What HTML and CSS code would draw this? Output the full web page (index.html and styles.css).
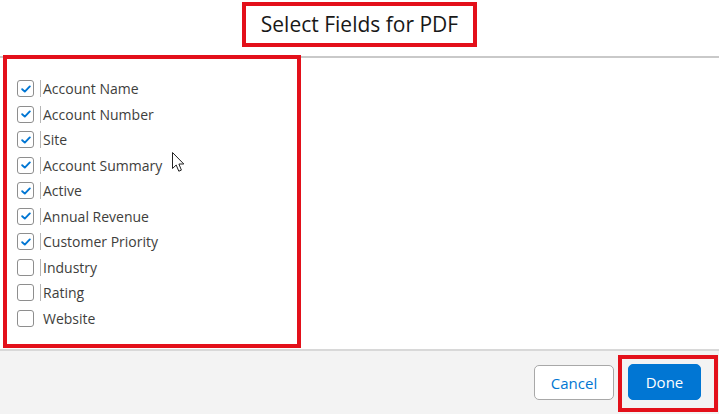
FILE: index.html
```html
<!DOCTYPE html>
<html lang="en">
<head>
<meta charset="utf-8">
<title>Select Fields for PDF</title>
<link rel="stylesheet" href="styles.css">
</head>
<body>
<div class="modal">
  <header class="modal-header">
    <h1 class="title">Select Fields for PDF</h1>
  </header>
  <section class="modal-body">
    <div class="field-list">
      <label class="field"><span class="cb checked"><svg viewBox="0 0 10 8" width="10" height="8"><path d="M1.2 4.2 L3.8 6.6 L8.8 1.4" fill="none" stroke="#0176d3" stroke-width="1.9" stroke-linecap="round" stroke-linejoin="round"/></svg></span><span class="sep"></span><span class="name">Account Name</span></label>
      <label class="field"><span class="cb checked"><svg viewBox="0 0 10 8" width="10" height="8"><path d="M1.2 4.2 L3.8 6.6 L8.8 1.4" fill="none" stroke="#0176d3" stroke-width="1.9" stroke-linecap="round" stroke-linejoin="round"/></svg></span><span class="sep"></span><span class="name">Account Number</span></label>
      <label class="field"><span class="cb checked"><svg viewBox="0 0 10 8" width="10" height="8"><path d="M1.2 4.2 L3.8 6.6 L8.8 1.4" fill="none" stroke="#0176d3" stroke-width="1.9" stroke-linecap="round" stroke-linejoin="round"/></svg></span><span class="sep"></span><span class="name">Site</span></label>
      <label class="field"><span class="cb checked"><svg viewBox="0 0 10 8" width="10" height="8"><path d="M1.2 4.2 L3.8 6.6 L8.8 1.4" fill="none" stroke="#0176d3" stroke-width="1.9" stroke-linecap="round" stroke-linejoin="round"/></svg></span><span class="sep"></span><span class="name">Account Summary</span></label>
      <label class="field"><span class="cb checked"><svg viewBox="0 0 10 8" width="10" height="8"><path d="M1.2 4.2 L3.8 6.6 L8.8 1.4" fill="none" stroke="#0176d3" stroke-width="1.9" stroke-linecap="round" stroke-linejoin="round"/></svg></span><span class="sep"></span><span class="name">Active</span></label>
      <label class="field"><span class="cb checked"><svg viewBox="0 0 10 8" width="10" height="8"><path d="M1.2 4.2 L3.8 6.6 L8.8 1.4" fill="none" stroke="#0176d3" stroke-width="1.9" stroke-linecap="round" stroke-linejoin="round"/></svg></span><span class="sep"></span><span class="name">Annual Revenue</span></label>
      <label class="field"><span class="cb checked"><svg viewBox="0 0 10 8" width="10" height="8"><path d="M1.2 4.2 L3.8 6.6 L8.8 1.4" fill="none" stroke="#0176d3" stroke-width="1.9" stroke-linecap="round" stroke-linejoin="round"/></svg></span><span class="sep"></span><span class="name">Customer Priority</span></label>
      <label class="field"><span class="cb"></span><span class="sep"></span><span class="name">Industry</span></label>
      <label class="field"><span class="cb"></span><span class="sep"></span><span class="name">Rating</span></label>
      <label class="field"><span class="cb"></span><span class="sep sep-none"></span><span class="name">Website</span></label>
    </div>
    <svg class="cursor" viewBox="0 0 14 21" width="14" height="21"><path d="M0.5 0.5 L0.5 16.5 L4.2 13 L6.8 19.2 L9.4 18.1 L6.9 12 L11.8 12 Z" fill="#fff" stroke="#222" stroke-width="1" stroke-linejoin="round"/></svg>
  </section>
  <footer class="modal-footer">
    <button class="btn btn-neutral" type="button">Cancel</button>
    <div class="done-wrap"><button class="btn btn-brand" type="button">Done</button></div>
  </footer>
</div>
</body>
</html>
```
FILE: styles.css
```css
* { box-sizing: border-box; }
html, body {
  margin: 0;
  padding: 0;
  background: #fff;
}
body {
  font-family: "Open Sans", "Noto Sans", "Liberation Sans", sans-serif;
  color: #3e3e3c;
  width: 719px;
  height: 414px;
  overflow: hidden;
}
.modal {
  display: flex;
  flex-direction: column;
  height: 414px;
}
.modal-header {
  height: 58px;
  border-bottom: 2px solid #c9c9c9;
  display: flex;
  justify-content: center;
  align-items: flex-start;
  padding-top: 2px;
}
.title {
  margin: 0;
  width: 235px;
  height: 45px;
  border: 4px solid #e3101a;
  font-size: 21px;
  font-weight: 400;
  color: #181818;
  display: flex;
  align-items: center;
  justify-content: center;
  padding-bottom: 1px;
}
.modal-body {
  position: relative;
  height: 291px;
  padding-left: 3px;
}
.field-list {
  margin-top: -3px;
  width: 298px;
  height: 293px;
  border: 4px solid #e3101a;
  padding: 17px 0 0 10px;
  display: flex;
  flex-direction: column;
}
.field {
  display: flex;
  align-items: center;
  height: 25.5px;
  font-size: 14px;
  color: #3e3e3c;
}
.cb {
  width: 17px;
  height: 17px;
  border: 1px solid #8e8e8e;
  border-radius: 3px;
  background: #fff;
  display: flex;
  align-items: center;
  justify-content: center;
  flex: none;
}
.cb svg { display: block; }
.sep {
  width: 1px;
  height: 17px;
  background: #b5b5b5;
  margin: 0 2px 0 6px;
  flex: none;
}
.sep-none { background: transparent; }
.cursor {
  position: absolute;
  left: 172px;
  top: 94px;
}
.modal-footer {
  flex: 1;
  background: #f3f3f3;
  border-top: 2px solid #d8d8d8;
  display: flex;
  justify-content: flex-end;
  align-items: flex-start;
  padding: 4px 1px 0 0;
}
.btn {
  font-family: "Open Sans", "Noto Sans", "Liberation Sans", sans-serif;
  font-size: 15px;
  border-radius: 5px;
  cursor: pointer;
}
.btn-neutral {
  margin-top: 10px;
  width: 80px;
  height: 35px;
  background: #fff;
  border: 1px solid #a8a8a8;
  color: #0176d3;
  margin-right: 4px;
}
.done-wrap {
  width: 100px;
  height: 57px;
  border: 4px solid #e3101a;
  padding: 5px 0 0 6px;
}
.btn-brand {
  width: 73px;
  height: 36px;
  background: #0176d3;
  border: 1px solid #0176d3;
  color: #fff;
  font-weight: 500;
}
```
